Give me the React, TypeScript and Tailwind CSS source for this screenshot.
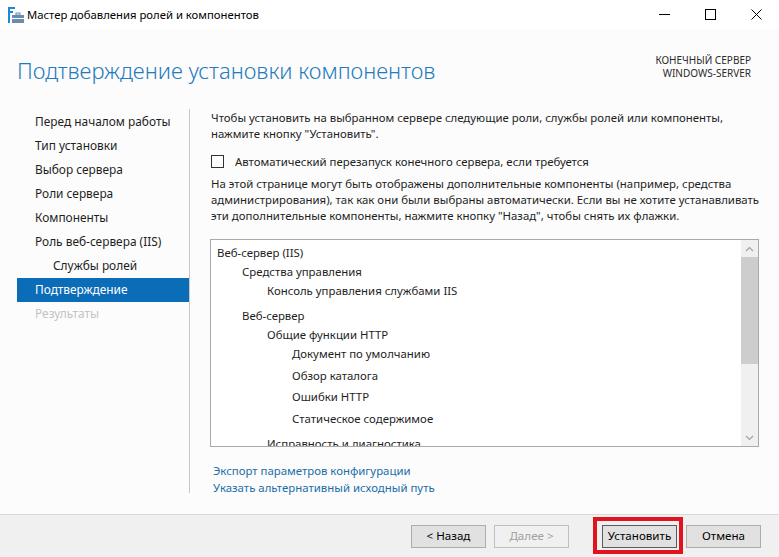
import React from "react";

const font = { fontFamily: '"Noto Sans", "Open Sans", sans-serif' };

function AppIcon() {
  return (
    <svg width="16" height="16" viewBox="0 0 16 16">
      <rect x="0" y="0" width="7" height="2" fill="#1e88d8" />
      <rect x="0" y="0" width="2" height="16" fill="#1e88d8" />
      <rect x="0" y="4" width="5" height="2" fill="#1e88d8" />
      <rect x="4" y="8" width="12" height="8" fill="#6a8caf" />
      <rect x="8" y="6" width="4" height="2" fill="none" stroke="#6a8caf" strokeWidth="1" />
      <rect x="4" y="11" width="12" height="1" fill="#ffffff" />
    </svg>
  );
}

function TitleBar() {
  return (
    <div className="h-[29px] bg-white flex items-center shrink-0">
      <div className="ml-[8px] mt-[1px]">
        <AppIcon />
      </div>
      <div className="ml-[3px] text-[11.3px] text-black leading-none">
        Мастер добавления ролей и компонентов
      </div>
      <div className="ml-auto flex items-center h-full">
        <div className="w-[46px] h-full flex items-center justify-center">
          <svg width="11" height="11" viewBox="0 0 11 11">
            <line x1="0" y1="5.5" x2="11" y2="5.5" stroke="#000" strokeWidth="1" />
          </svg>
        </div>
        <div className="w-[46px] h-full flex items-center justify-center">
          <svg width="11" height="11" viewBox="0 0 11 11">
            <rect x="0.5" y="0.5" width="10" height="10" fill="none" stroke="#000" strokeWidth="1" />
          </svg>
        </div>
        <div className="w-[46px] h-full flex items-center justify-center">
          <svg width="11" height="11" viewBox="0 0 11 11">
            <line x1="0.5" y1="0.5" x2="10.5" y2="10.5" stroke="#000" strokeWidth="1" />
            <line x1="10.5" y1="0.5" x2="0.5" y2="10.5" stroke="#000" strokeWidth="1" />
          </svg>
        </div>
      </div>
    </div>
  );
}

const steps: { label: string; indent?: boolean; active?: boolean; disabled?: boolean }[] = [
  { label: "Перед началом работы" },
  { label: "Тип установки" },
  { label: "Выбор сервера" },
  { label: "Роли сервера" },
  { label: "Компоненты" },
  { label: "Роль веб-сервера (IIS)" },
  { label: "Службы ролей", indent: true },
  { label: "Подтверждение", active: true },
  { label: "Результаты", disabled: true },
];

function Sidebar() {
  return (
    <div className="w-[190px] shrink-0 pl-[17px] pt-[4px] pb-[21px] flex">
      <div className="flex-1 pt-[1px]">
        {steps.map((s) => (
          <div
            key={s.label}
            className={
              "h-[24px] flex items-center text-[11.9px] whitespace-nowrap " +
              (s.indent ? "pl-[36px] " : "pl-[18px] ") +
              (s.active
                ? "bg-[#0b6db8] text-white "
                : s.disabled
                ? "text-[#c4c4c4] "
                : "text-[#1e1e1e] ")
            }
          >
            {s.label}
          </div>
        ))}
      </div>
      <div className="w-px bg-[#c8c8c8]" />
    </div>
  );
}

type Row = { text: string; level: number; mt: number };
const rows: Row[] = [
  { text: "Веб-сервер (IIS)", level: 0, mt: 0 },
  { text: "Средства управления", level: 1, mt: 0 },
  { text: "Консоль управления службами IIS", level: 2, mt: 0 },
  { text: "Веб-сервер", level: 1, mt: 6 },
  { text: "Общие функции HTTP", level: 2, mt: 0 },
  { text: "Документ по умолчанию", level: 3, mt: 0 },
  { text: "Обзор каталога", level: 3, mt: 3 },
  { text: "Ошибки HTTP", level: 3, mt: 2 },
  { text: "Статическое содержимое", level: 3, mt: 3 },
  { text: "Исправность и диагностика", level: 2, mt: 6 },
];

const indents = ["pl-[6px]", "pl-[31px]", "pl-[56px]", "pl-[81px]"];
const gaps: Record<number, string> = { 0: "mt-0", 2: "mt-[2px]", 3: "mt-[3px]", 4: "mt-[4px]", 6: "mt-[6px]" };

function ScrollBar() {
  return (
    <div className="w-[17px] bg-[#f0f0f0] flex flex-col shrink-0">
      <div className="h-[17px] flex items-center justify-center">
        <svg width="9" height="6" viewBox="0 0 9 6">
          <polyline points="1,5 4.5,1.5 8,5" fill="none" stroke="#a3a3a3" strokeWidth="1.2" />
        </svg>
      </div>
      <div className="h-[107px] bg-[#cdcdcd]" />
      <div className="flex-1" />
      <div className="h-[17px] flex items-center justify-center">
        <svg width="9" height="6" viewBox="0 0 9 6">
          <polyline points="1,1 4.5,4.5 8,1" fill="none" stroke="#a3a3a3" strokeWidth="1.2" />
        </svg>
      </div>
    </div>
  );
}

function ListBox() {
  return (
    <div className="ml-[-1px] w-[549px] h-[208px] border border-[#a9a9a9] bg-white flex">
      <div className="flex-1 overflow-hidden pt-[3px]">
        {rows.map((r) => (
          <div
            key={r.text}
            className={
              "h-[19px] flex items-center text-[11.4px] text-[#1e1e1e] whitespace-nowrap " +
              indents[r.level] +
              " " +
              gaps[r.mt]
            }
          >
            {r.text}
          </div>
        ))}
      </div>
      <ScrollBar />
    </div>
  );
}

function Content() {
  return (
    <div className="flex-1 pl-[21px] pt-[5px] text-[11.4px] text-[#1e1e1e]">
      <div className="leading-[16px] whitespace-nowrap">
        Чтобы установить на выбранном сервере следующие роли, службы ролей или компоненты,
        <br />
        нажмите кнопку "Установить".
      </div>
      <div className="mt-[13px] flex items-center h-[13px]">
        <div className="w-[13px] h-[13px] border border-[#333] bg-white" />
        <div className="ml-[11px] whitespace-nowrap">
          Автоматический перезапуск конечного сервера, если требуется
        </div>
      </div>
      <div className="mt-[8px] leading-[16px] whitespace-nowrap">
        На этой странице могут быть отображены дополнительные компоненты (например, средства
        <br />
        администрирования), так как они были выбраны автоматически. Если вы не хотите устанавливать
        <br />
        эти дополнительные компоненты, нажмите кнопку "Назад", чтобы снять их флажки.
      </div>
      <div className="mt-[15px]">
        <ListBox />
      </div>
      <div className="mt-[15px] ml-[2px] text-[#1a6ea8] leading-[17px] whitespace-nowrap">
        <div>Экспорт параметров конфигурации</div>
        <div>Указать альтернативный исходный путь</div>
      </div>
    </div>
  );
}

function Button({
  children,
  disabled,
  primary,
}: {
  children: React.ReactNode;
  disabled?: boolean;
  primary?: boolean;
}) {
  return (
    <div
      className={
        "w-[75px] h-[23px] flex items-center justify-center text-[11.6px] border " +
        (disabled
          ? "border-[#bfbfbf] bg-[#f0f0f0] text-[#a0a0a0]"
          : primary
          ? "border-[#5a5a5a] bg-[#e1e1e1] text-black"
          : "border-[#adadad] bg-[#e1e1e1] text-black")
      }
    >
      {children}
    </div>
  );
}

export default function App() {
  return (
    <div className="w-[779px] h-[557px] flex flex-col overflow-hidden" style={font}>
      <TitleBar />
      <div className="flex-1 bg-[#fcfcfc] flex flex-col">
        <div className="h-[76px] shrink-0 flex items-start">
          <div className="pl-[17px] pt-[30px] text-[22px] font-light text-[#237bbd] leading-none whitespace-nowrap">
            Подтверждение установки компонентов
          </div>
          <div className="ml-auto mr-[28px] pt-[25px] text-[10px] text-[#2a2a2a] leading-[13px] text-right">
            <div>КОНЕЧНЫЙ СЕРВЕР</div>
            <div>WINDOWS-SERVER</div>
          </div>
        </div>
        <div className="flex-1 flex">
          <Sidebar />
          <Content />
        </div>
      </div>
      <div className="h-[43px] shrink-0 bg-[#f0f0f0] border-t border-[#d9d9d9] flex items-center justify-end pr-[18px]">
        <div className="flex items-center">
          <Button>&lt; Назад</Button>
          <div className="ml-[8px]">
            <Button disabled>Далее &gt;</Button>
          </div>
          <div className="ml-[33px] relative">
            <Button primary>Установить</Button>
            <div className="absolute left-[-9px] top-[-8px] right-[-6px] bottom-[-6px] border-[4px] border-[#e0141e] pointer-events-none" />
          </div>
          <div className="ml-[9px]">
            <Button>Отмена</Button>
          </div>
        </div>
      </div>
    </div>
  );
}
